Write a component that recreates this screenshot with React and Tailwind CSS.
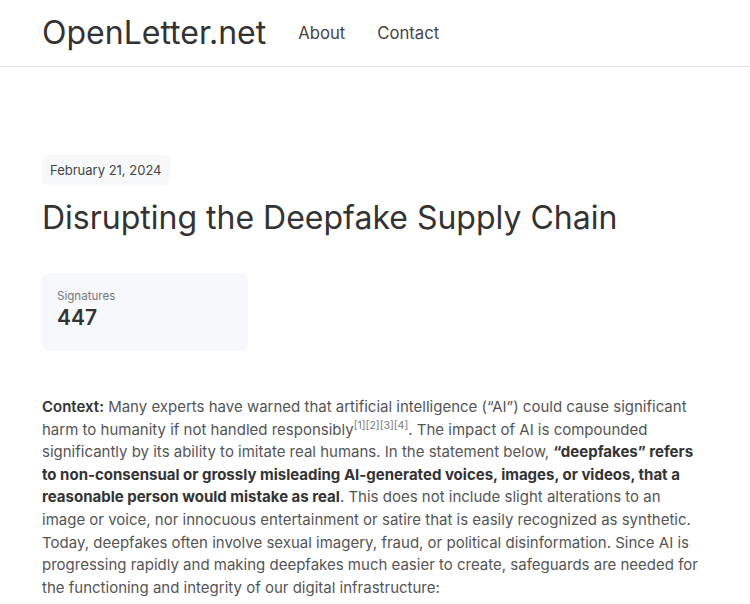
export default function App() {
  return (
    <div
      className="min-h-screen bg-white text-[#333]"
      style={{ fontFamily: "Inter, 'Noto Sans', sans-serif" }}
    >
      {/* Top navigation */}
      <header className="h-[67px] border-b border-[#e3e3e3] px-[42px] flex items-center gap-8">
        <a className="text-[32px] leading-none text-[#333]">OpenLetter.net</a>
        <nav className="flex items-center gap-8 text-[16.7px] text-[#444] pt-[1px]">
          <a>About</a>
          <a>Contact</a>
        </nav>
      </header>

      <main className="pl-[42px] pr-[46px] pt-[88px]">
        <div className="inline-block rounded-md bg-[#f7f8fa] px-2 py-[6px] text-[13px] leading-[18px] text-[#444]">
          February 21, 2024
        </div>

        <h1 className="mt-[13px] text-[32px] leading-[40px] text-[#333]">
          Disrupting the Deepfake Supply Chain
        </h1>

        {/* Signature counter */}
        <div className="mt-[35px] w-[206px] h-[78px] rounded-lg bg-[#f6f8fb] px-[15px] pt-[15px]">
          <div className="text-[11.6px] leading-4 text-[#777]">Signatures</div>
          <div className="text-[21px] leading-7 font-semibold text-[#333]">447</div>
        </div>

        <p className="mt-[45px] text-[15px] leading-[22.6px] text-[#555]">
          <strong className="font-semibold text-[#333]">Context:</strong> Many experts have warned that
          artificial intelligence (“AI”) could cause significant harm to humanity if not handled
          responsibly
          <sup className="text-[10.5px] text-[#777]">[1][2][3][4]</sup>. The impact of AI is compounded
          significantly by its ability to imitate real humans. In the statement below,{" "}
          <strong className="font-bold text-[#333]">
            “deepfakes” refers to non-consensual or grossly misleading AI-generated voices, images, or
            videos, that a reasonable person would mistake as real
          </strong>
          . This does not include slight alterations to an image or voice, nor innocuous entertainment
          or satire that is easily recognized as synthetic. Today, deepfakes often involve sexual
          imagery, fraud, or political disinformation. Since AI is progressing rapidly and making
          deepfakes much easier to create, safeguards are needed for the functioning and integrity of
          our digital infrastructure:
        </p>
      </main>
    </div>
  );
}
